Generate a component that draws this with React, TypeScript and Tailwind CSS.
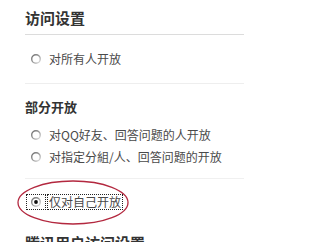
import React from "react";

const font = { fontFamily: '"Noto Sans CJK SC", "Noto Sans", sans-serif' };

function Radio({ checked = false }: { checked?: boolean }) {
  return (
    <svg width="10" height="10" viewBox="0 0 10 10" className="shrink-0">
      <defs>
        <linearGradient id={checked ? "rg1" : "rg0"} x1="0" y1="0" x2="1" y2="1">
          <stop offset="0" stopColor="#6b6b6b" />
          <stop offset="0.5" stopColor="#9a9a9a" />
          <stop offset="1" stopColor="#e6e6e6" />
        </linearGradient>
      </defs>
      <circle cx="5" cy="5" r="4.3" fill="#fff" stroke={`url(#${checked ? "rg1" : "rg0"})`} strokeWidth="1.4" />
      {checked && <circle cx="5" cy="5" r="1.9" fill="#111" />}
    </svg>
  );
}

function Option({ label }: { label: string }) {
  return (
    <div className="flex h-[22px] items-center pl-[6px]">
      <Radio />
      <span className="ml-[8px] text-[12px] leading-none text-[#4a4a4a]">{label}</span>
    </div>
  );
}

export default function App() {
  return (
    <div className="h-[242px] w-[244px] overflow-hidden bg-white pl-[25px] pt-[8px]" style={font}>
      <div className="text-[15px] font-bold leading-[20px] text-[#333]">访问设置</div>
      <div className="mt-[6px] border-t border-[#dcdcdc]" />
      <div className="mt-[13px]">
        <Option label="对所有人开放" />
      </div>
      <div className="mt-[13px] border-t border-[#eeeeee]" />
      <div className="mt-[13px] text-[13px] font-bold leading-[20px] text-[#333]">部分开放</div>
      <div className="mt-[7px] flex flex-col">
        <Option label="对QQ好友、回答问题的人开放" />
        <Option label="对指定分組/人、回答问题的开放" />
      </div>
      <div className="mt-[10px] border-t border-[#f0f0f0]" />
      <div className="relative mt-[1px] flex h-[44px] items-center">
        <div className="ml-[1px] flex h-[16px] w-[20px] items-center justify-center border border-dotted border-[#222]">
          <Radio checked />
        </div>
        <div className="ml-[1px] flex h-[16px] items-center border border-dotted border-[#222] pl-[1px] pr-[1px]">
          <span className="text-[12px] leading-none text-[#4a4a4a]">仅对自己开放</span>
        </div>
        <svg
          className="pointer-events-none absolute left-[-8px] top-0"
          width="113"
          height="45"
          viewBox="0 0 113 45"
        >
          <ellipse cx="56" cy="22.5" rx="55" ry="21.5" fill="none" stroke="#b3283f" strokeWidth="1.3" />
        </svg>
      </div>
      <div className="mt-[9px] whitespace-nowrap text-[15px] font-bold leading-[20px] text-[#333]">腾讯用户访问设置</div>
    </div>
  );
}
